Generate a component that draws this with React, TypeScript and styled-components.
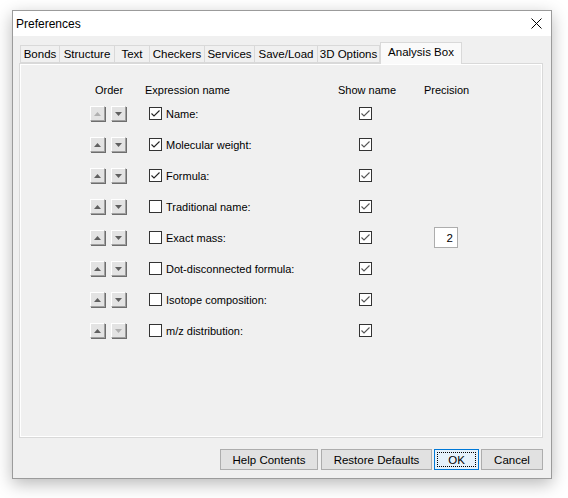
import styled, { createGlobalStyle } from "styled-components";

const GlobalStyle = createGlobalStyle`
  html, body {
    margin: 0;
    padding: 0;
    background: #ffffff;
  }
  body {
    font-family: "Liberation Sans", Arial, sans-serif;
    font-size: 11px;
    color: #000;
  }
`;

const Page = styled.div`
  width: 568px;
  height: 498px;
  padding: 10px 0 0 12px;
  box-sizing: border-box;
`;

const Window = styled.div`
  width: 540px;
  height: 469px;
  box-sizing: border-box;
  border: 1px solid #9b9b9b;
  background: #f0f0f0;
  box-shadow: 0 5px 16px rgba(0, 0, 0, 0.28);
  display: flex;
  flex-direction: column;
`;

const TitleBar = styled.div`
  height: 25px;
  background: #ffffff;
  display: flex;
  align-items: center;
  justify-content: space-between;
  padding: 0 9px 0 3px;
`;

const Title = styled.span`
  font-size: 12px;
  line-height: 16px;
`;

const Body = styled.div`
  flex: 1;
  display: flex;
  flex-direction: column;
  padding: 6px 8px 0 6px;
`;

const TabStrip = styled.div`
  display: flex;
  align-items: flex-end;
  height: 21px;
  padding-left: 1px;
  position: relative;
  z-index: 1;
`;

const Tab = styled.div<{ $active?: boolean; $w: number }>`
  box-sizing: border-box;
  width: ${(p) => p.$w}px;
  height: ${(p) => (p.$active ? 22 : 18)}px;
  margin-bottom: ${(p) => (p.$active ? -1 : 0)}px;
  border: 1px solid #d9d9d9;
  border-left-width: ${(p) => (p.$active ? 1 : 0)}px;
  border-bottom: ${(p) => (p.$active ? "none" : "1px solid #d9d9d9")};
  background: ${(p) => (p.$active ? "#fafafa" : "#f0f0f0")};
  display: flex;
  align-items: center;
  justify-content: center;
  font-size: 11.5px;
  white-space: nowrap;
  padding-bottom: ${(p) => (p.$active ? 3 : 0)}px;
  &:first-child {
    border-left-width: 1px;
  }
`;

const Panel = styled.div`
  height: 375px;
  box-sizing: border-box;
  border: 1px solid #d9d9d9;
  box-shadow: inset 1px 1px 0 #ffffff, inset -1px -1px 0 #ffffff;
  background: #f0f0f0;
  padding: 18px 0 0 70px;
`;

const Grid = styled.div`
  display: grid;
  grid-template-columns: 55px 193px 56px 74px;
  grid-auto-rows: 31px;
  grid-template-rows: 16px;
  align-items: center;
`;

const Header = styled.div<{ $align?: string; $pad?: number; $w?: number }>`
  font-size: 11px;
  line-height: 16px;
  white-space: nowrap;
  text-align: ${(p) => p.$align || "left"};
  padding-left: ${(p) => p.$pad || 0}px;
  width: ${(p) => (p.$w ? `${p.$w}px` : "auto")};
  align-self: start;
`;

const OrderCell = styled.div`
  display: flex;
  gap: 6px;
`;

const SpinButton = styled.div`
  width: 15px;
  height: 15px;
  box-sizing: border-box;
  background: #e3e3e3;
  border-top: 1px solid #ffffff;
  border-left: 1px solid #ffffff;
  border-right: 1px solid #a0a0a0;
  border-bottom: 1px solid #a0a0a0;
  box-shadow: 1px 1px 0 #6e6e6e;
  display: flex;
  align-items: center;
  justify-content: center;
`;

const ExprCell = styled.label`
  display: flex;
  align-items: center;
  padding-left: 4px;
  gap: 4px;
  font-size: 11px;
  white-space: nowrap;
`;

const Box = styled.div`
  width: 13px;
  height: 13px;
  box-sizing: border-box;
  border: 1px solid #333333;
  background: #ffffff;
  display: flex;
  align-items: center;
  justify-content: center;
  flex-shrink: 0;
`;

const CenterCell = styled.div`
  display: flex;
  justify-content: center;
  padding-right: 1px;
`;

const PrecisionCell = styled.div`
  display: flex;
  justify-content: center;
  padding-left: 30px;
`;

const PrecisionInput = styled.div`
  width: 24px;
  height: 21px;
  box-sizing: border-box;
  border: 1px solid #adadad;
  background: #ffffff;
  display: flex;
  align-items: center;
  justify-content: flex-end;
  padding-right: 4px;
  font-size: 11.5px;
`;

const Footer = styled.div`
  display: flex;
  justify-content: flex-end;
  gap: 2px;
  padding: 11px 0 0 0;
`;

const Button = styled.div<{ $w: number; $default?: boolean; $space?: number }>`
  width: ${(p) => p.$w}px;
  height: 21px;
  margin-right: ${(p) => p.$space || 0}px;
  box-sizing: border-box;
  border: 1px solid ${(p) => (p.$default ? "#0078d7" : "#adadad")};
  background: ${(p) => (p.$default ? "#e5f1fb" : "#e1e1e1")};
  display: flex;
  align-items: center;
  justify-content: center;
  font-size: 11.5px;
  white-space: nowrap;
  position: relative;
`;

const FocusRing = styled.span`
  position: absolute;
  inset: 2px;
  border: 1px dotted #000;
`;

const Arrow = ({ up, disabled }: { up?: boolean; disabled?: boolean }) => (
  <svg width="7" height="4" viewBox="0 0 7 4">
    <polygon
      points={up ? "3.5,0 7,4 0,4" : "0,0 7,0 3.5,4"}
      fill={disabled ? "#b0b0b0" : "#606060"}
    />
  </svg>
);

const Check = ({ color }: { color: string }) => (
  <svg width="11" height="11" viewBox="0 0 11 11">
    <polyline
      points="1.5,5.5 4,8 9.5,2.5"
      fill="none"
      stroke={color}
      strokeWidth="1.1"
    />
  </svg>
);

const CloseIcon = () => (
  <svg width="11" height="11" viewBox="0 0 11 11">
    <path d="M0.5 0.5 L10.5 10.5 M10.5 0.5 L0.5 10.5" stroke="#000" strokeWidth="1" />
  </svg>
);

const tabs = [
  { label: "Bonds", w: 40 },
  { label: "Structure", w: 55 },
  { label: "Text", w: 35 },
  { label: "Checkers", w: 55 },
  { label: "Services", w: 50 },
  { label: "Save/Load", w: 63 },
  { label: "3D Options", w: 62 },
  { label: "Analysis Box", w: 82, active: true },
];

const rows = [
  { name: "Name:", checked: true },
  { name: "Molecular weight:", checked: true },
  { name: "Formula:", checked: true },
  { name: "Traditional name:", checked: false },
  { name: "Exact mass:", checked: false, precision: "2" },
  { name: "Dot-disconnected formula:", checked: false },
  { name: "Isotope composition:", checked: false },
  { name: "m/z distribution:", checked: false },
];

export default function App() {
  return (
    <>
      <GlobalStyle />
      <Page>
        <Window>
          <TitleBar>
            <Title>Preferences</Title>
            <CloseIcon />
          </TitleBar>
          <Body>
            <TabStrip>
              {tabs.map((t) => (
                <Tab key={t.label} $w={t.w} $active={t.active}>
                  {t.label}
                </Tab>
              ))}
            </TabStrip>
            <Panel>
              <Grid>
                <Header $align="center" $w={38}>
                  Order
                </Header>
                <Header>Expression name</Header>
                <Header $align="center">Show name</Header>
                <Header $align="center" $pad={30}>
                  Precision
                </Header>
                {rows.map((r, i) => (
                  <Row key={r.name} index={i} {...r} last={i === rows.length - 1} />
                ))}
              </Grid>
            </Panel>
            <Footer>
              <Button $w={98} $space={1}>
                Help Contents
              </Button>
              <Button $w={111}>Restore Defaults</Button>
              <Button $w={45} $default>
                <FocusRing />
                OK
              </Button>
              <Button $w={62}>Cancel</Button>
            </Footer>
          </Body>
        </Window>
      </Page>
    </>
  );
}

function Row({
  index,
  name,
  checked,
  precision,
  last,
}: {
  index: number;
  name: string;
  checked: boolean;
  precision?: string;
  last: boolean;
}) {
  return (
    <>
      <OrderCell>
        <SpinButton>
          <Arrow up disabled={index === 0} />
        </SpinButton>
        <SpinButton>
          <Arrow disabled={last} />
        </SpinButton>
      </OrderCell>
      <ExprCell>
        <Box>{checked && <Check color="#222" />}</Box>
        {name}
      </ExprCell>
      <CenterCell>
        <Box>
          <Check color="#555" />
        </Box>
      </CenterCell>
      <PrecisionCell>{precision && <PrecisionInput>{precision}</PrecisionInput>}</PrecisionCell>
    </>
  );
}
